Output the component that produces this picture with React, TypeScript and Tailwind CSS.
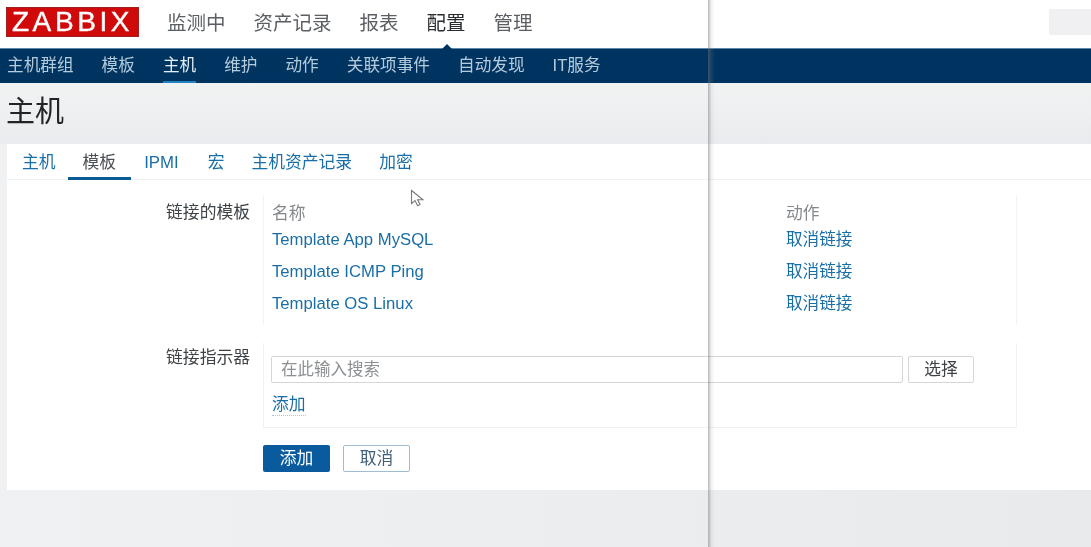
import React from "react";

const cjk = "font-['Liberation_Sans','Noto_Sans_CJK_SC',sans-serif]";

const top = ["监测中", "资产记录", "报表", "配置", "管理"];
const sub = ["主机群组", "模板", "主机", "维护", "动作", "关联项事件", "自动发现", "IT服务"];
const tabs = [
  { t: "主机", c: "pt-[2px] pr-[12px]" },
  { t: "模板", c: "border-b-[3px] border-[#0a5a96] px-[15px] pt-[5px] text-[#4a5056]" },
  { t: "IPMI", c: "pt-[2px] pl-[13px] pr-[14px]" },
  { t: "宏", c: "pt-[2px] pl-[15px] pr-[13px]" },
  { t: "主机资产记录", c: "pt-[2px] pl-[14px] pr-[13px]" },
  { t: "加密", c: "pt-[2px] pl-[14px]" },
];
const rows = ["Template App MySQL", "Template ICMP Ping", "Template OS Linux"];

export default function App() {
  return (
    <div className={`relative h-[547px] w-[1091px] overflow-hidden bg-gradient-to-r from-[#f0f1f2] to-[#e9eaec] ${cjk}`}>
      <div className="h-full blur-[0.7px]">
        <header className="flex h-[48px] items-center justify-between bg-white pl-[6px]">
          <div className="flex items-center">
            <div className="mb-[4px] flex h-[30px] w-[133px] items-center justify-center border border-[#a02020] bg-[#d00a0a] text-[28px] leading-none tracking-[3.6px] text-white [-webkit-text-stroke:0.4px_white]">
              ZABBIX
            </div>
            <nav className="ml-[28px] flex gap-[28px] text-[19.5px] text-[#5b5f63]">
              {top.map((t) => (
                <span key={t} className={t === "配置" ? "relative text-[#2a2d30]" : ""}>
                  {t}
                  {t === "配置" && (
                    <span className="absolute bottom-[-14px] left-[11px] h-0 w-0 border-x-[9px] border-b-[9px] border-x-transparent border-b-[#003460]" />
                  )}
                </span>
              ))}
            </nav>
          </div>
          <div className="mb-[4px] h-[26px] w-[42px] rounded-l-[2px] bg-[#f0f0f2]" />
        </header>

        <nav className="flex h-[35px] gap-[28px] border-t border-[#5f87a8] bg-[#003460] pl-[7px] text-[16.65px] text-[#b4cbdc]">
          {sub.map((t) => (
            <span
              key={t}
              className={`flex h-full items-center ${t === "主机" ? "border-b-[2px] border-[#1f83c4] pt-[2px] text-[#e6eff5]" : ""}`}
            >
              {t}
            </span>
          ))}
        </nav>

        <div className="flex h-[61px] items-center bg-gradient-to-b from-[#f1f3f3] to-[#eaebee] pb-[3px] pl-[6px]">
          <h1 className="text-[29px] font-normal leading-none text-[#222527]">主机</h1>
        </div>

        <main className="ml-[7px] h-[346px] bg-white">
          <div className="flex h-[36px] border-b border-[#f0f1f2] pl-[15px] text-[16.8px] text-[#1a6ea6]">
            {tabs.map(({ t, c }) => (
              <span key={t} className={`flex h-[36px] items-center ${c}`}>
                {t}
              </span>
            ))}
          </div>

          <section className="mt-[15px] flex">
            <div className="w-[243px] pt-[8px] text-right text-[16.8px] leading-[20px] text-[#3d4246]">链接的模板</div>
            <div className="ml-[13px] h-[130px] w-[754px] border-x border-[#f3f4f5] px-[8px]">
              <div className="grid grid-cols-[514px_1fr] pt-[9px] text-[#1a6ea6]">
                <span className="h-[19px] text-[16.8px] leading-[20px] text-[#85898d]">名称</span>
                <span className="h-[19px] text-[16.8px] leading-[20px] text-[#85898d]">动作</span>
                {rows.map((r) => (
                  <React.Fragment key={r}>
                    <span className="mt-[2px] flex h-[30px] items-center text-[16.7px]">{r}</span>
                    <span className="mt-[2px] flex h-[30px] items-center text-[16.6px]">取消链接</span>
                  </React.Fragment>
                ))}
              </div>
            </div>
          </section>

          <section className="mt-[18px] flex">
            <div className="w-[243px] pt-[5px] text-right text-[16.8px] leading-[20px] text-[#3d4246]">链接指示器</div>
            <div className="ml-[13px] h-[85px] w-[754px] rounded-br-[2px] border-x border-b border-[#f0f1f2] pl-[7px] pr-[42px] pt-[13px]">
              <div className="flex h-[27px] gap-[5px]">
                <div className="flex flex-1 items-center rounded-[2px] border border-[#d4d6d8] pl-[9px] text-[16.5px] text-[#8d9093]">
                  在此输入搜索
                </div>
                <button className="w-[66px] rounded-[2px] border border-[#d4d6d8] text-[16.8px] text-[#3d4246]">选择</button>
              </div>
              <div className="ml-[1px] mt-[12px] w-fit border-b border-dotted border-[#a9c8dd] text-[16.8px] leading-[20px] text-[#1a6ea6]">
                添加
              </div>
            </div>
          </section>

          <div className="ml-[256px] mt-[17px] flex gap-[13px]">
            <button className="h-[27px] w-[67px] rounded-[2px] bg-[#0a5a9e] text-[16.8px] text-white">添加</button>
            <button className="h-[27px] w-[67px] rounded-[2px] border-[1.5px] border-[#9fbcd1] bg-white text-[16.8px] text-[#3f5f78]">取消</button>
          </div>
        </main>
      </div>

      <div className="pointer-events-none absolute inset-y-0 left-[708px] w-[7px] bg-gradient-to-r from-[#6f737680] via-[#9a9da020] to-transparent" />

      <svg className="absolute left-[410px] top-[189px]" width="16" height="19" viewBox="0 0 16 19" fill="none">
        <path d="M1.5 1.5V14.5L5 11.6L7.6 16.8L10 15.6L7.6 10.8H13Z" fill="#fff" stroke="#777b7f" strokeWidth="1.1" />
      </svg>
    </div>
  );
}
